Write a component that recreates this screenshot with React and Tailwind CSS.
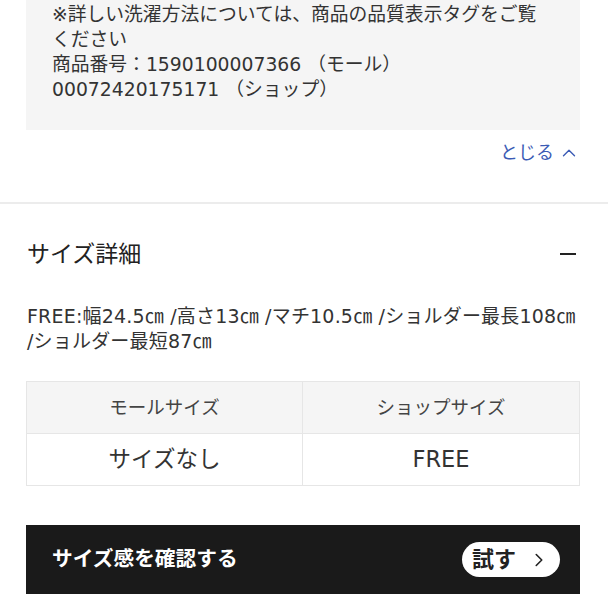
import { ChevronUp, ChevronRight } from 'lucide-react';

const jp = "font-['DejaVu_Sans','Noto_Sans_CJK_JP',sans-serif]";

const App = () => {
    return (
        <div className={`w-[608px] h-[608px] overflow-hidden bg-white text-[#333] ${jp}`}>
            {/* Notes box */}
            <div className="pl-[26px] pr-[28px]">
                <div className="bg-[#f5f5f5] pl-[26px] pr-4 pt-[2px] pb-[28px] text-[18.8px] leading-[25px] text-[#333]">
                    <p>※詳しい洗濯方法については、商品の品質表示タグをご覧<br />ください</p>
                    <p>商品番号：1590100007366 （モール）</p>
                    <p>00072420175171 （ショップ）</p>
                </div>
                <div className="flex justify-end mt-[10px]">
                    <button className="flex items-center gap-1 text-[18px] leading-[25px] text-[#3b5bb5]">
                        とじる
                        <ChevronUp className="w-[22px] h-[22px]" strokeWidth={1.5} />
                    </button>
                </div>
            </div>

            {/* Divider */}
            <div className="mt-[37px] h-[2px] bg-[#ececec]" />

            {/* Size details */}
            <div className="pl-[27px] pr-[32px]">
                <div className="flex items-center justify-between mt-[35px] h-[30px]">
                    <h2 className="text-[23px] leading-[30px] text-[#222]">サイズ詳細</h2>
                    <span className="block w-4 h-[2px] bg-[#222]" />
                </div>
                <p className="mt-[35px] text-[19px] leading-[25px] tracking-[0.01em] text-[#333] whitespace-nowrap">
                    FREE:幅24.5㎝ /高さ13㎝ /マチ10.5㎝ /ショルダー最長108㎝
                    <br />
                    /ショルダー最短87㎝
                </p>
            </div>

            <div className="pl-[26px] pr-[28px]">
                {/* Size table */}
                <div className="mt-[27px] grid grid-cols-2 border border-[#e6e6e6]">
                    <div className="h-[52px] flex items-center justify-center bg-[#f5f5f5] border-r border-b border-[#e6e6e6] text-[18.5px] text-[#444]">
                        モールサイズ
                    </div>
                    <div className="h-[52px] flex items-center justify-center bg-[#f5f5f5] border-b border-[#e6e6e6] text-[18.5px] text-[#444]">
                        ショップサイズ
                    </div>
                    <div className="h-[51px] flex items-center justify-center border-r border-[#e6e6e6] text-[22.5px] text-[#333]">
                        サイズなし
                    </div>
                    <div className="h-[51px] flex items-center justify-center text-[22.5px] text-[#333]">
                        FREE
                    </div>
                </div>

                {/* Size check bar */}
                <div className="mt-[39px] h-[69px] bg-[#1a1a1a] flex items-center justify-between pl-[26px] pr-[20px]">
                    <span className="text-white font-bold text-[20.7px]">サイズ感を確認する</span>
                    <button className="h-[35px] w-[98px] rounded-full bg-white flex items-center justify-center gap-[12px] text-[#222]">
                        <span className="font-bold text-[22px]">試す</span>
                        <ChevronRight className="w-[22px] h-[22px]" strokeWidth={1.75} />
                    </button>
                </div>
            </div>
        </div>
    );
};

export default App;
